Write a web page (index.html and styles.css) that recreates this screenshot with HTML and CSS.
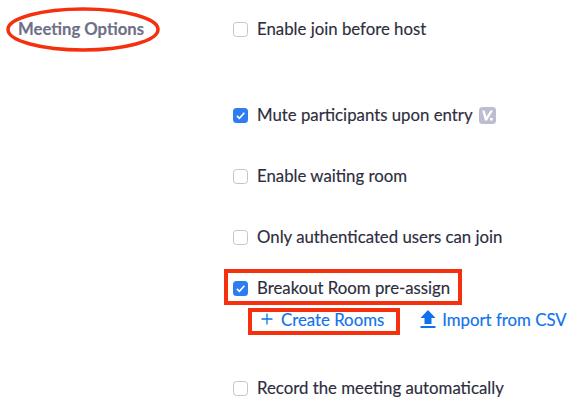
FILE: index.html
```html
<!DOCTYPE html>
<html lang="en">
<head>
<meta charset="utf-8">
<title>Meeting Options</title>
<link rel="stylesheet" href="styles.css">
</head>
<body>
<main class="page">
  <h2 class="title">Meeting Options</h2>
  <div class="options">
    <div class="opt opt-join"><span class="box"></span><span>Enable join before host</span></div>
    <div class="opt opt-mute"><span class="box on"><svg viewBox="0 0 14 14" class="tick"><path d="M3.6 7.3 6 9.7 10.6 4.4"/></svg></span><span>Mute participants upon entry</span>
      <svg class="vbadge" viewBox="0 0 17 17"><rect width="17" height="17" rx="3.5" fill="#bdbdd0"/><path d="M3.2 3.600 5.600 3.600 7.400 9.800 11.400 3.600 14 3.600 8 13.400 6 13.400Z M11 11h2.600v2.400H11Z" fill="#fff"/></svg></div>
    <div class="opt opt-wait"><span class="box"></span><span>Enable waiting room</span></div>
    <div class="opt opt-auth"><span class="box"></span><span>Only authenticated users can join</span></div>
    <div class="opt opt-breakout"><span class="box on"><svg viewBox="0 0 14 14" class="tick"><path d="M3.6 7.3 6 9.7 10.6 4.4"/></svg></span><span>Breakout Room pre-assign</span></div>
    <div class="links">
      <a class="link link-create"><svg class="plus" viewBox="0 0 12 12"><path d="M6 .5v11M.5 6h11"/></svg>Create Rooms</a>
      <a class="link link-import"><svg class="upload" viewBox="0 0 16 19"><path d="M8 0 15.5 8H11.5V14H4.500V8H.5Z"/><rect x="0.500" y="16" width="15" height="2"/></svg>Import from CSV</a>
    </div>
    <div class="opt opt-record"><span class="box"></span><span>Record the meeting automatically</span></div>
  </div>
  <svg class="mark-ellipse" viewBox="0 0 154 45"><ellipse cx="77" cy="22.500" rx="75" ry="20.500"/></svg>
  <div class="mark mark-breakout"></div>
  <div class="mark mark-create"></div>
</main>
</body>
</html>
```
FILE: styles.css
```css
html, body {
  margin: 0;
  height: 408px;
  overflow: hidden;
  background: #fff;
}
.page {
  position: relative;
  display: grid;
  grid-template-columns: 233px 1fr;
  width: 587px;
  height: 408px;
  font-family: Lato, "Liberation Sans", sans-serif;
  font-size: 16.800px;
  color: #2d2d3d;
  -webkit-text-stroke: 0.15px currentColor;
}
.title {
  margin: 17px 0 0 18px;
  font-size: 16.700px;
  line-height: 24px;
  font-weight: 700;
  color: #6e7087;
}
.options {
  display: flex;
  flex-direction: column;
  padding-top: 17px;
}
.opt {
  display: flex;
  align-items: center;
  height: 24px;
  line-height: 24px;
  white-space: nowrap;
}
.box {
  box-sizing: border-box;
  flex: none;
  width: 15px;
  height: 15px;
  margin-right: 9px;
  border: 1.500px solid #c4c4c9;
  border-radius: 3.500px;
  background: #fff;
}
.box.on {
  border: 0;
  background: #2d7cf2;
}
.tick {
  display: block;
  width: 15px;
  height: 15px;
  fill: none;
  stroke: #fff;
  stroke-width: 1.500;
}
.vbadge {
  width: 17px;
  height: 17px;
  margin-left: 6px;
}
.opt-mute { margin-top: 62px; }
.opt-wait { margin-top: 37px; }
.opt-auth { margin-top: 37px; }
.opt-breakout { margin-top: 27px; }
.links {
  display: flex;
  align-items: center;
  height: 24px;
  margin-top: 7px;
  padding-left: 28px;
  white-space: nowrap;
}
.link {
  display: flex;
  align-items: center;
  color: #0e72ed;
}
.plus {
  width: 12px;
  height: 12px;
  margin-right: 8px;
  fill: none;
  stroke: #0e72ed;
  stroke-width: 1.300;
}
.link-import { margin-left: 36px; }
.upload {
  width: 16px;
  height: 19px;
  margin-right: 6px;
  fill: #0e72ed;
}
.opt-record { margin-top: 45px; }
.mark {
  position: absolute;
  box-sizing: border-box;
  border: 4px solid #f5300f;
}
.mark-breakout {
  left: 224px;
  top: 269px;
  width: 238px;
  height: 36px;
}
.mark-create {
  left: 248px;
  top: 308px;
  width: 152px;
  height: 27px;
}
.mark-ellipse {
  position: absolute;
  left: 6px;
  top: 7px;
  width: 154px;
  height: 45px;
  fill: none;
  stroke: #f5300f;
  stroke-width: 3.500;
}
```
